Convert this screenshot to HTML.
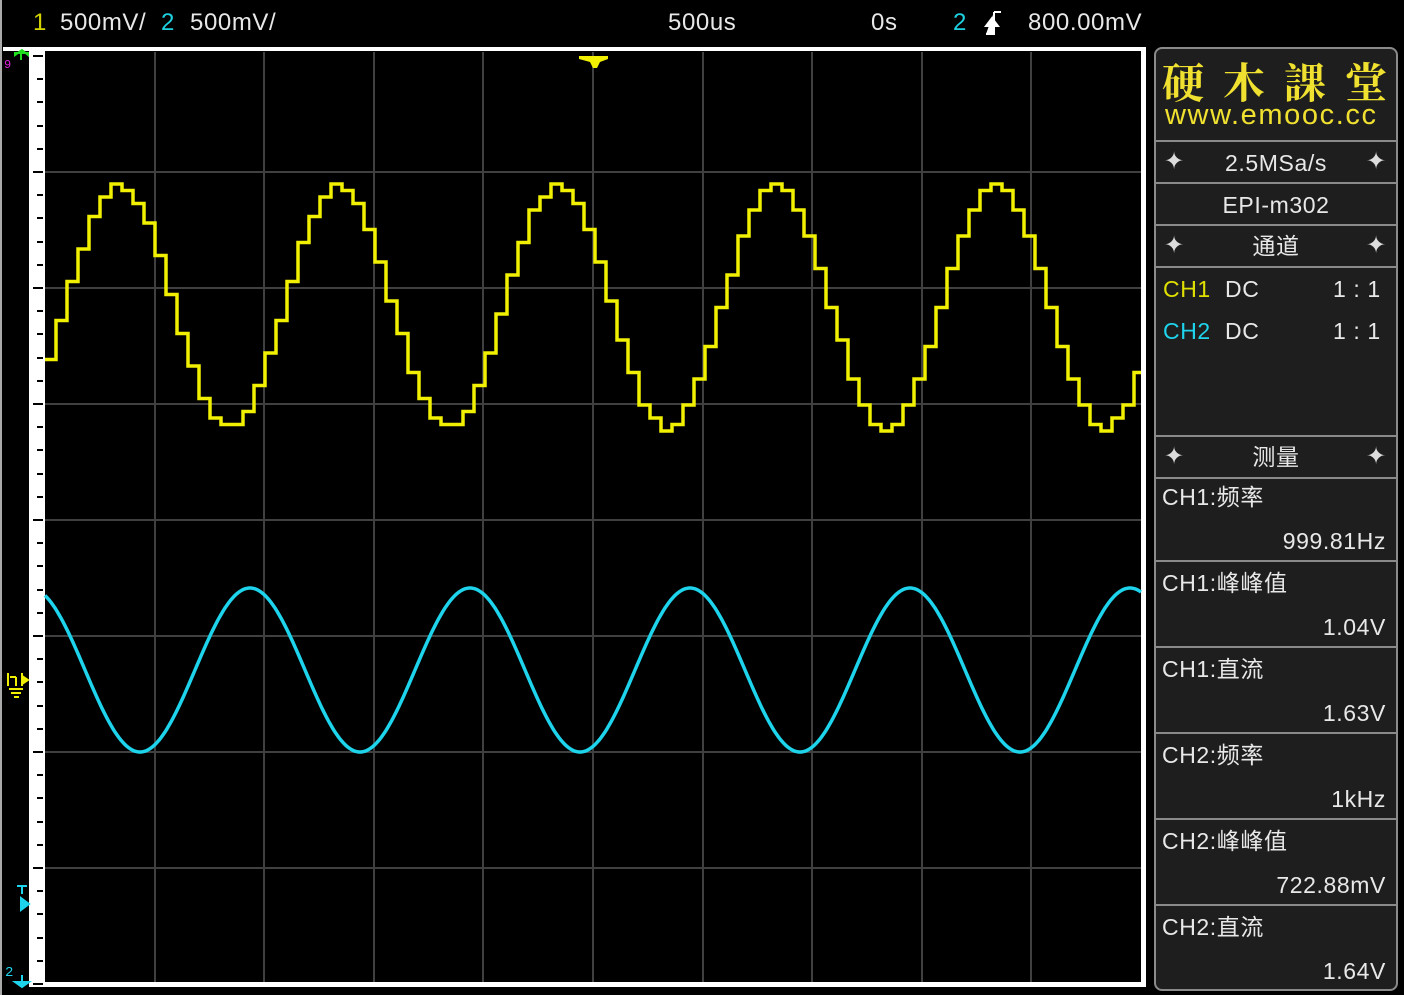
<!DOCTYPE html>
<html><head><meta charset="utf-8"><style>
body{margin:0;width:1404px;height:995px;background:#000;position:relative;overflow:hidden;font-family:"Liberation Sans","Noto Sans CJK SC",sans-serif;color:#e8e8e8}
.t{position:absolute;font-size:24px;top:9px;line-height:28px;letter-spacing:0.6px}
.p{position:absolute;left:1154px;top:47px;width:240px;height:940px;background:#1e1e1e;border:2px solid #8a8a8a;border-radius:8px}
.d{position:absolute;left:0;width:240px;height:2px;background:#8a8a8a}
.r{position:absolute;font-size:23px;line-height:28px;color:#e8e8e8;letter-spacing:0.6px}
.s{position:absolute;font-size:24px;color:#ddd;line-height:24px}
</style></head><body>
<div style="position:absolute;left:0;top:0;width:2px;height:995px;background:#aaa"></div>
<div class="t" style="left:33px;color:#d4d400">1</div>
<div class="t" style="left:60px">500mV/</div>
<div class="t" style="left:161px;color:#1ed0e0">2</div>
<div class="t" style="left:190px">500mV/</div>
<div class="t" style="left:668px">500us</div>
<div class="t" style="left:871px">0s</div>
<div class="t" style="left:953px;color:#1ed0e0">2</div>
<svg style="position:absolute;left:982px;top:10px" width="22" height="26"><path d="M12 2H19M12 2V24H4M4 16L10 8L16 16Z" stroke="#fff" stroke-width="2" fill="#fff"/></svg>
<div class="t" style="left:1028px">800.00mV</div>

<svg style="position:absolute;left:0;top:0" width="1150" height="995" id="sc">
<rect x="3" y="47" width="1143" height="4" fill="#fff"/>
<rect x="29" y="47" width="16" height="940" fill="#fff"/>
<rect x="1141" y="47" width="5" height="940" fill="#fff"/>
<rect x="29" y="982" width="1117" height="5" fill="#fff"/>
<rect x="45" y="51" width="1096" height="931" fill="#000"/>
<g id="grid" stroke="#404040" stroke-width="2"></g>
<g id="ticks" fill="#000"></g>
<path id="y" fill="none" stroke="#f0f000" stroke-width="3.5"/>
<path id="c" fill="none" stroke="#1ed4ec" stroke-width="3.5"/>
<path d="M579 56H608V59L600 62L597 68L593 68L590 62L579 59Z" fill="#f0f000"/>
<path d="M15 53H28V55L22 50L15 55ZM21 53V60" stroke="#20e020" stroke-width="2" fill="#20e020"/>
<text x="4" y="68" fill="#e020e0" font-size="12" font-family="Liberation Mono">9</text>
<path d="M8 673V686M10 677H16M16 677V686M22 673V686M22 676L28 680L22 684ZM9 689H23M11 693H21M14 697H19" stroke="#f0f000" stroke-width="2" fill="#f0f000"/>
<path d="M17 886H27M22 886V894M21 898V910M21 898L29 904L21 910Z" stroke="#1ed4ec" stroke-width="2" fill="#1ed4ec"/>
<text x="5" y="976" fill="#1ed4ec" font-size="14" font-family="Liberation Mono">2</text>
<path d="M22 975V983M15 982H29L22 987Z" stroke="#1ed4ec" stroke-width="2" fill="#1ed4ec"/>
</svg>

<div class="p">
<div style="position:absolute;left:6px;top:2px;font-family:'Noto Serif CJK SC',serif;font-size:42px;color:#f0e030;letter-spacing:19px;font-weight:bold;white-space:nowrap">硬木課堂</div>
<div style="position:absolute;left:9px;top:50px;font-size:29px;color:#f0e030;letter-spacing:1.6px;white-space:nowrap">www.emooc.cc</div>
<div class="d" style="top:91px"></div>
<div class="s" style="left:8px;top:101px">✦</div><div class="s" style="left:210px;top:101px">✦</div>
<div class="r" style="left:0;width:240px;text-align:center;top:100px">2.5MSa/s</div>
<div class="d" style="top:133px"></div>
<div class="r" style="left:0;width:240px;text-align:center;top:142px">EPI-m302</div>
<div class="d" style="top:175px"></div>
<div class="s" style="left:8px;top:185px">✦</div><div class="s" style="left:210px;top:185px">✦</div>
<div class="r" style="left:0;width:240px;text-align:center;top:183px">通道</div>
<div class="d" style="top:217px"></div>
<div class="r" style="left:7px;top:226px;color:#e0e000">CH1</div><div class="r" style="left:69px;top:226px">DC</div><div class="r" style="left:177px;top:226px">1 : 1</div>
<div class="r" style="left:7px;top:268px;color:#1ed4ec">CH2</div><div class="r" style="left:69px;top:268px">DC</div><div class="r" style="left:177px;top:268px">1 : 1</div>
<div class="d" style="top:386px"></div>
<div class="s" style="left:8px;top:396px">✦</div><div class="s" style="left:210px;top:396px">✦</div>
<div class="r" style="left:0;width:240px;text-align:center;top:394px">测量</div>
<div class="d" style="top:428px"></div>
<div class="r" style="left:6px;top:434px">CH1:频率</div><div class="r" style="right:10px;top:478px">999.81Hz</div>
<div class="d" style="top:511px"></div>
<div class="r" style="left:6px;top:520px">CH1:峰峰值</div><div class="r" style="right:10px;top:564px">1.04V</div>
<div class="d" style="top:597px"></div>
<div class="r" style="left:6px;top:606px">CH1:直流</div><div class="r" style="right:10px;top:650px">1.63V</div>
<div class="d" style="top:683px"></div>
<div class="r" style="left:6px;top:692px">CH2:频率</div><div class="r" style="right:10px;top:736px">1kHz</div>
<div class="d" style="top:769px"></div>
<div class="r" style="left:6px;top:778px">CH2:峰峰值</div><div class="r" style="right:10px;top:822px">722.88mV</div>
<div class="d" style="top:855px"></div>
<div class="r" style="left:6px;top:864px">CH2:直流</div><div class="r" style="right:10px;top:908px">1.64V</div>
</div>
<script>
var ns="http://www.w3.org/2000/svg",g=document.getElementById('grid'),tk=document.getElementById('ticks');
function el(p,t,a){var e=document.createElementNS(ns,t);for(var k in a)e.setAttribute(k,a[k]);p.appendChild(e);}
for(var i=1;i<10;i++){var x=Math.round(45+109.6*i);el(g,'line',{x1:x,x2:x,y1:52,y2:982});}
for(var j=1;j<8;j++){var y=Math.round(56+116*j);el(g,'line',{x1:45,x2:1141,y1:y,y2:y});}
for(var k=0;k<=40;k++){var y=Math.round(56+23.2*k);var maj=k%5==0;el(tk,'rect',{x:maj?33:37,y:y-1,width:maj?10:6,height:2});}
var d='';var py=null;
for(var x=45;x<=1141;x+=11){var xc=x+5;var v=305-121*Math.sin(2*Math.PI*(xc-65)/219);v=Math.round(v/6.5)*6.5+2;
if(py===null)d='M45 '+v;else d+='V'+v;d+='H'+Math.min(x+11,1141);py=v;}
document.getElementById('y').setAttribute('d',d);
var c='';for(var x=45;x<=1141;x+=2){var v=670-82*Math.cos(2*Math.PI*(x-250)/220);c+=(x==45?'M':'L')+x+' '+v.toFixed(1);}
document.getElementById('c').setAttribute('d',c);
</script>
</body></html>
